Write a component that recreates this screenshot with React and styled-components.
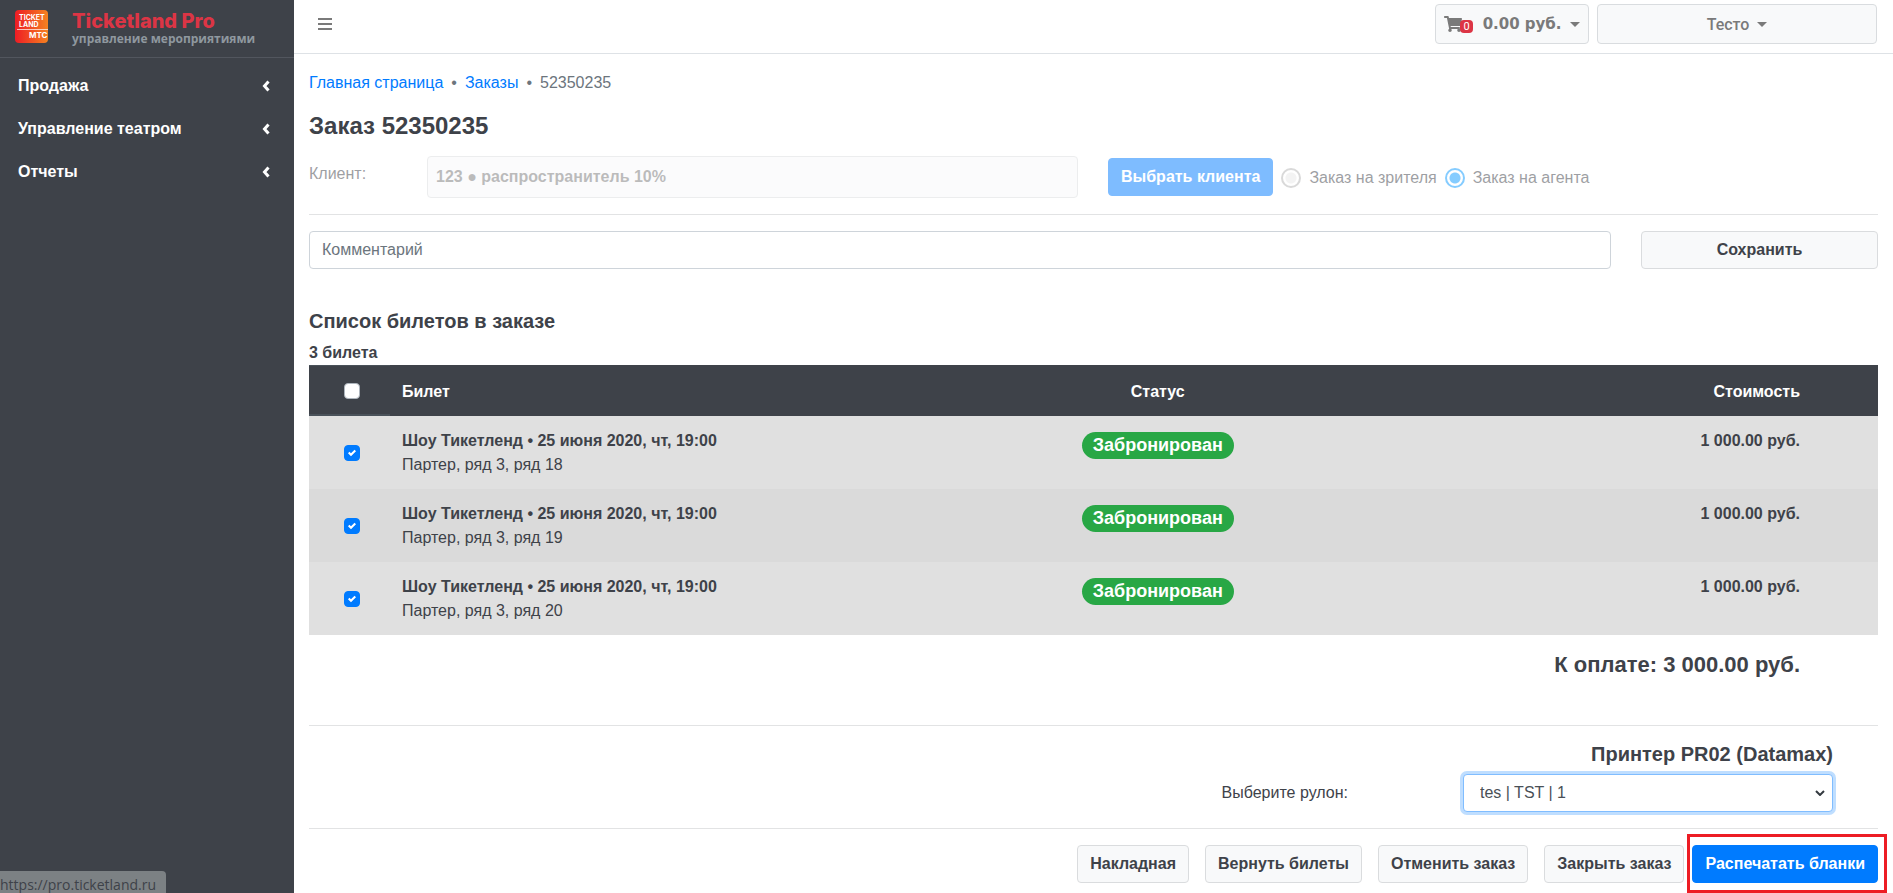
import React, { useState } from 'react';
import styled, { createGlobalStyle } from 'styled-components';
import { FaShoppingCart } from 'react-icons/fa';

const GlobalStyle = createGlobalStyle`
  *, *::before, *::after {
    box-sizing: border-box;
  }
  body {
    margin: 0;
    background: #fff;
    color: #3e4249;
    font-family: "Liberation Sans", Arial, sans-serif;
    font-size: 16px;
    line-height: 24px;
    overflow: hidden;
  }
`;

const Page = styled.div`
  display: grid;
  grid-template-columns: 294px 1fr;
  height: 100vh;
`;

const Sidebar = styled.aside`
  position: relative;
  background: #3e4249;
  color: #fff;
`;

const Brand = styled.a`
  display: flex;
  gap: 24px;
  height: 58px;
  padding: 10px 15px;
  border-bottom: 1px solid #52565e;
  text-decoration: none;
`;

const BrandText = styled.div`
  display: flex;
  flex-direction: column;
`;

const BrandName = styled.span`
  color: #dc3545;
  font-family: Inter, "Open Sans", sans-serif;
  font-size: 20px;
  font-weight: 800;
  line-height: 22px;
`;

const BrandNote = styled.span`
  color: #8f989f;
  font-family: "Open Sans", "Noto Sans", sans-serif;
  font-size: 12px;
  font-weight: 700;
  line-height: 13px;
`;

const Menu = styled.nav`
  display: flex;
  flex-direction: column;
  gap: 3px;
  padding-top: 8px;
`;

const MenuItem = styled.a`
  display: flex;
  align-items: center;
  justify-content: space-between;
  padding: 8px 24px 8px 18px;
  color: #fff;
  font-weight: 700;
  text-decoration: none;
`;

const StatusBar = styled.div`
  position: absolute;
  left: 0;
  bottom: 0;
  width: 166px;
  height: 22px;
  overflow: hidden;
  border-top-right-radius: 4px;
  background: #7c8184;
  color: #3e4249;
  font-family: "Open Sans", "Noto Sans", sans-serif;
  font-size: 14px;
  line-height: 28px;
`;

const Main = styled.div`
  display: flex;
  flex-direction: column;
  min-width: 0;
`;

const TopBar = styled.header`
  display: flex;
  align-items: center;
  gap: 8px;
  height: 54px;
  padding: 0 16px 5px;
  border-bottom: 1px solid #dee2e6;
`;

const Burger = styled.button`
  display: flex;
  margin-right: auto;
  padding: 8px;
  border: 0;
  background: none;
  color: #7a7a7a;
`;

const TopButton = styled.button`
  display: flex;
  align-items: center;
  justify-content: center;
  width: ${(p) => p.$width};
  height: 40px;
  padding: 0 8px;
  border: 1px solid #d9dcdf;
  border-radius: 4px;
  background: #f8f9fa;
  color: #7a7a7a;
  font-family: Roboto, "Noto Sans", sans-serif;
  font-size: 16px;
  font-weight: 500;
  white-space: nowrap;
`;

const CartIcon = styled(FaShoppingCart)`
  flex: none;
  width: 18px;
  height: 18px;
`;

const CartSum = styled.span`
  font-family: "DejaVu Sans", sans-serif;
  font-size: 15px;
  font-weight: 700;
`;

const CartCount = styled.span`
  margin: 4px 10px 0 -2px;
  padding: 0 3px;
  border-radius: 4px;
  background: #dc3545;
  color: #fff;
  font-size: 11px;
  font-weight: 400;
  line-height: 13px;
`;

const Caret = styled.span`
  margin-left: 8px;
  border-top: 5px solid;
  border-left: 5px solid transparent;
  border-right: 5px solid transparent;
`;

const Content = styled.main`
  display: flex;
  flex-direction: column;
  padding: 17px 15px 0;
`;

const Breadcrumb = styled.nav`
  display: flex;
  gap: 8px;
  color: #6c757d;

  a {
    color: #007bff;
    text-decoration: none;
  }
`;

const Title = styled.h1`
  margin: 17px 0 16px;
  font-size: 24px;
  line-height: 28px;
`;

const ClientRow = styled.div`
  display: flex;
  align-items: center;
  height: 42px;
  opacity: 0.5;
`;

const ClientLabel = styled.label`
  width: 118px;
  padding-bottom: 6px;
`;

const ClientInput = styled.input`
  flex: 1;
  max-width: 651px;
  height: 42px;
  margin-right: 30px;
  padding: 0 8px;
  border: 1px solid #dadcde;
  border-radius: 4px;
  background: #f8f9fa;
  color: #7a7a7a;
  font: inherit;
  font-weight: 700;
`;

const Button = styled.button`
  height: 38px;
  padding: 0 12px;
  border: 1px solid ${(p) => (p.$primary ? '#007bff' : '#dadcde')};
  border-radius: 4px;
  background: ${(p) => (p.$primary ? '#007bff' : '#f8f9fa')};
  color: ${(p) => (p.$primary ? '#fff' : '#3e4249')};
  font: inherit;
  font-weight: 700;
  white-space: nowrap;
`;

const RadioLabel = styled.label`
  display: flex;
  align-items: center;
  gap: 8px;
  margin-left: 8px;
  padding-top: 2px;
`;

const Radio = styled.input`
  appearance: none;
  width: 20px;
  height: 20px;
  margin: 0;
  border: 2px solid #b4b4b4;
  border-radius: 50%;
  background: radial-gradient(circle, #e8e8e8 5px, #fff 6px);

  &:checked {
    border-color: #0d9bff;
    background: radial-gradient(circle, #0d9bff 5px, #fff 6px);
  }
`;

const Rule = styled.hr`
  width: 100%;
  margin: ${(p) => p.$margin || '16px 0'};
  border: 0;
  border-top: 1px solid #e2e3e4;
`;

const CommentRow = styled.form`
  display: grid;
  grid-template-columns: 1fr 237px;
  gap: 30px;
`;

const CommentInput = styled.input`
  height: 38px;
  padding: 0 12px;
  border: 1px solid #ced4da;
  border-radius: 4px;
  font: inherit;

  &::placeholder {
    color: #6c757d;
    opacity: 1;
  }
`;

const Subtitle = styled.h2`
  margin: ${(p) => p.$margin || '0'};
  font-size: 20px;
  line-height: 24px;
`;

const TicketCount = styled.strong`
  margin-top: 8px;
`;

const Table = styled.table`
  width: 100%;
  table-layout: fixed;
  border-collapse: collapse;
`;

const HeadCell = styled.th`
  width: ${(p) => p.$width || 'auto'};
  height: 51px;
  padding: ${(p) => (p.$lined ? '0 12px 0 16px' : '2px 12px 0')};
  padding-right: ${(p) => (p.$align === 'right' ? '78px' : '12px')};
  background: #3e4249;
  color: #fff;
  text-align: ${(p) => p.$align || 'left'};
  box-shadow: ${(p) => (p.$lined ? 'inset 0 1px #4a525a, inset 0 -2px #4a525a' : 'none')};
`;

const Row = styled.tr`
  height: 73px;
  background: #e0e0e0;

  &:nth-child(even) {
    background: #dadada;
  }
`;

const Cell = styled.td`
  padding: 13px ${(p) => (p.$align === 'right' ? '78px' : '12px')} 12px 12px;
  text-align: ${(p) => p.$align || 'left'};
  vertical-align: top;
  font-weight: ${(p) => (p.$align === 'right' ? 700 : 400)};
`;

const CheckCell = styled.td`
  padding: 0 12px 0 16px;
  vertical-align: middle;
`;

const Checkbox = styled.input`
  appearance: none;
  display: block;
  width: 16px;
  height: 16px;
  margin: 0 auto;
  border: 1px solid #adb5bd;
  border-radius: 4px;
  background: #fff;

  &:checked {
    border-color: #007bff;
    background: #007bff
      url("data:image/svg+xml,%3Csvg xmlns='http://www.w3.org/2000/svg' viewBox='0 0 8 8'%3E%3Cpath fill='%23fff' d='M6.56.75L2.97 4.35 1.44 2.82 0 4.26l2.97 2.99L8 2.19z'/%3E%3C/svg%3E")
      center / 8px no-repeat;
  }
`;

const Badge = styled.span`
  display: inline-block;
  margin-top: 3px;
  padding: 0 11px;
  border-radius: 14px;
  background: #28a745;
  color: #fff;
  font-size: 18px;
  font-weight: 700;
  line-height: 27px;
`;

const Total = styled.p`
  margin: 17px 78px 47px 0;
  font-size: 22px;
  font-weight: 700;
  line-height: 26px;
  text-align: right;
`;

const Printer = styled.section`
  display: flex;
  flex-direction: column;
  align-items: flex-end;
  padding-right: 45px;
`;

const RollField = styled.div`
  display: flex;
  align-items: center;
  gap: 115px;
  margin-top: 8px;
`;

const Select = styled.select`
  appearance: none;
  width: 370px;
  height: 38px;
  padding: 0 16px;
  border: 1px solid #80bdff;
  border-radius: 4px;
  background: #fff
    url("data:image/svg+xml,%3Csvg xmlns='http://www.w3.org/2000/svg' viewBox='0 0 10 6'%3E%3Cpath fill='none' stroke='%23343a40' stroke-width='2' d='M1 1l4 4 4-4'/%3E%3C/svg%3E")
    right 7px center / 10px 6px no-repeat;
  box-shadow: 0 0 0 3px #bfdeff;
  color: #495057;
  font: inherit;
`;

const Actions = styled.footer`
  display: flex;
  justify-content: flex-end;
  gap: 16px;
`;

const Highlight = styled.div`
  position: relative;
  margin-left: -8px;

  &::after {
    content: "";
    position: absolute;
    inset: -11px -9px -10px -5px;
    border: 3px solid #ed1c24;
    pointer-events: none;
  }
`;

const MENU = ['Продажа', 'Управление театром', 'Отчеты'];
const SEATS = [18, 19, 20];
const ACTIONS = ['Накладная', 'Вернуть билеты', 'Отменить заказ', 'Закрыть заказ'];

function Logo() {
  return (
    <svg width="33" height="33" viewBox="0 0 33 33">
      <defs>
        <linearGradient id="logo" x1="0" y1="0" x2="1" y2="0">
          <stop offset="0" stopColor="#ee1c25" />
          <stop offset="1" stopColor="#f58220" />
        </linearGradient>
      </defs>
      <rect width="33" height="33" rx="4" fill="url(#logo)" />
      <g fill="#fff" fontFamily="Inter, sans-serif" fontWeight="700">
        <text x="4" y="10" fontSize="7">TICKET</text>
        <text x="4" y="17" fontSize="7">LAND</text>
        <text x="14" y="28" fontSize="8">МТС</text>
      </g>
      <path d="M2 19.5h31" stroke="#fff" strokeOpacity="0.7" />
    </svg>
  );
}

function Chevron() {
  return (
    <svg width="8" height="12" viewBox="0 0 8 12" fill="none" stroke="#fff" strokeWidth="3">
      <path d="M6.5 1.5L2.5 6l4 4.5" />
    </svg>
  );
}

function App() {
  const [checked, setChecked] = useState(SEATS);
  const [target, setTarget] = useState('agent');

  const toggle = (seat) => {
    setChecked(checked.includes(seat) ? checked.filter((s) => s !== seat) : [...checked, seat]);
  };

  return (
    <Page>
      <GlobalStyle />
      <Sidebar>
        <Brand href="#">
          <Logo />
          <BrandText>
            <BrandName>Ticketland Pro</BrandName>
            <BrandNote>управление мероприятиями</BrandNote>
          </BrandText>
        </Brand>
        <Menu>
          {MENU.map((item) => (
            <MenuItem href="#" key={item}>
              {item}
              <Chevron />
            </MenuItem>
          ))}
        </Menu>
        <StatusBar>https://pro.ticketland.ru</StatusBar>
      </Sidebar>
      <Main>
        <TopBar>
          <Burger aria-label="Меню">
            <svg width="14" height="12" viewBox="0 0 14 12" stroke="currentColor" strokeWidth="2">
              <path d="M0 1h14M0 6h14M0 11h14" />
            </svg>
          </Burger>
          <TopButton $width="154px">
            <CartIcon />
            <CartCount>0</CartCount>
            <CartSum>0.00 руб.</CartSum>
            <Caret />
          </TopButton>
          <TopButton $width="280px">
            Тесто
            <Caret />
          </TopButton>
        </TopBar>
        <Content>
          <Breadcrumb>
            <a href="#">Главная страница</a>
            <span>•</span>
            <a href="#">Заказы</a>
            <span>•</span>
            <span>52350235</span>
          </Breadcrumb>
          <Title>Заказ 52350235</Title>
          <ClientRow>
            <ClientLabel htmlFor="client">Клиент:</ClientLabel>
            <ClientInput id="client" readOnly value="123 ● распространитель 10%" />
            <Button $primary>Выбрать клиента</Button>
            <RadioLabel>
              <Radio type="radio" name="target" checked={target === 'viewer'} onChange={() => setTarget('viewer')} />
              Заказ на зрителя
            </RadioLabel>
            <RadioLabel>
              <Radio type="radio" name="target" checked={target === 'agent'} onChange={() => setTarget('agent')} />
              Заказ на агента
            </RadioLabel>
          </ClientRow>
          <Rule />
          <CommentRow>
            <CommentInput placeholder="Комментарий" aria-label="Комментарий" />
            <Button type="button">Сохранить</Button>
          </CommentRow>
          <Subtitle $margin="40px 0 0">Список билетов в заказе</Subtitle>
          <TicketCount>3 билета</TicketCount>
          <Table>
            <thead>
              <tr>
                <HeadCell $width="81px" $align="center" $lined>
                  <Checkbox
                    type="checkbox"
                    aria-label="Выбрать все"
                    checked={false}
                    onChange={() => setChecked(checked.length ? [] : SEATS)}
                  />
                </HeadCell>
                <HeadCell>Билет</HeadCell>
                <HeadCell $width="248px" $align="center">Статус</HeadCell>
                <HeadCell $width="38%" $align="right">Стоимость</HeadCell>
              </tr>
            </thead>
            <tbody>
              {SEATS.map((seat) => (
                <Row key={seat}>
                  <CheckCell>
                    <Checkbox
                      type="checkbox"
                      aria-label={`ряд ${seat}`}
                      checked={checked.includes(seat)}
                      onChange={() => toggle(seat)}
                    />
                  </CheckCell>
                  <Cell>
                    <strong>Шоу Тикетленд • 25 июня 2020, чт, 19:00</strong>
                    <br />
                    Партер, ряд 3, ряд {seat}
                  </Cell>
                  <Cell $align="center">
                    <Badge>Забронирован</Badge>
                  </Cell>
                  <Cell $align="right">1 000.00 руб.</Cell>
                </Row>
              ))}
            </tbody>
          </Table>
          <Total>К оплате: 3 000.00 руб.</Total>
          <Rule $margin="0 0 16px" />
          <Printer>
            <Subtitle>Принтер PR02 (Datamax)</Subtitle>
            <RollField>
              <label htmlFor="roll">Выберите рулон:</label>
              <Select id="roll">
                <option>tes | TST | 1</option>
              </Select>
            </RollField>
          </Printer>
          <Rule />
          <Actions>
            {ACTIONS.map((action) => (
              <Button key={action}>{action}</Button>
            ))}
            <Highlight>
              <Button $primary>Распечатать бланки</Button>
            </Highlight>
          </Actions>
        </Content>
      </Main>
    </Page>
  );
}

export default App;
